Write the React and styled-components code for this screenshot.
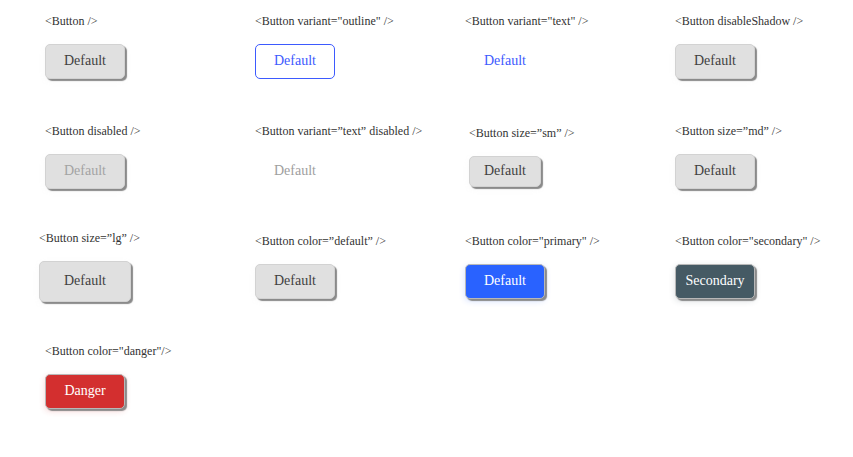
import styled, { createGlobalStyle, css } from 'styled-components';

const GlobalStyle = createGlobalStyle`
	body {
		margin: 0;
		background: #ffffff;
		font-family: serif;
	}
`

const Grid = styled.div`
	display: grid;
	grid-template-columns: repeat(4, 170px);
	grid-template-rows: repeat(4, 90px);
	column-gap: 40px;
	row-gap: 20px;
	padding-top: 1px;
	justify-items: center;
	align-items: center;
`

const Cell = styled.div`
	display: flex;
	flex-direction: column;
	align-items: flex-start;
	gap: 16px;
	width: ${({ $w }) => $w}px;
`

const Label = styled.span`
	font-size: 12px;
	line-height: 14px;
	color: #333333;
	white-space: nowrap;
`

const sizes = {
	sm: { w: 72, h: 31 },
	md: { w: 80, h: 35 },
	lg: { w: 92, h: 41 },
}

const colors = {
	default: { bg: '#e0e0e0', fg: '#3f3f3f', border: '#d2d2d2' },
	primary: { bg: '#2962ff', fg: '#ffffff', border: '#b8b8b8' },
	secondary: { bg: '#455a64', fg: '#ffffff', border: '#b8b8b8' },
	danger: { bg: '#d32f2f', fg: '#ffffff', border: '#b8b8b8' },
}

const StyledButton = styled.button`
	box-sizing: border-box;
	width: ${({ $size }) => sizes[$size].w}px;
	height: ${({ $size }) => sizes[$size].h}px;
	padding: 0;
	font-family: serif;
	font-size: 14px;
	border-radius: 5px;
	cursor: pointer;
	${({ $variant, $color, disabled }) => {
		const c = colors[$color];
		if ($variant === 'outline') return css`
			background: #ffffff;
			color: #3d5afe;
			border: 1px solid #3d5afe;
		`
		if ($variant === 'text') return css`
			background: transparent;
			border: none;
			color: ${disabled ? '#9e9e9e' : '#3d5afe'};
		`
		return css`
			background: ${c.bg};
			color: ${disabled ? '#a3a3a3' : c.fg};
			border: 1px solid ${c.border};
			box-shadow: 2px 2px 1px #8a8a8a, 0 2px 6px ${c.bg}33;
		`
	}}
`

function Button({ variant = 'contained', color = 'default', size = 'md', disabled, children = 'Default' }){
	return(
		<StyledButton $variant={variant} $color={color} $size={size} disabled={disabled}>
			{children}
		</StyledButton>
	)
}

const demos = [
	{ label: '<Button />', props: {} },
	{ label: '<Button variant="outline" />', props: { variant: 'outline' } },
	{ label: '<Button variant="text" />', props: { variant: 'text' } },
	{ label: '<Button disableShadow />', props: {} },
	{ label: '<Button disabled />', props: { disabled: true } },
	{ label: '<Button variant=”text” disabled />', props: { variant: 'text', disabled: true } },
	{ label: '<Button size=”sm” />', props: { size: 'sm' } },
	{ label: '<Button size=”md” />', props: { size: 'md' } },
	{ label: '<Button size=”lg” />', props: { size: 'lg' } },
	{ label: '<Button color=”default” />', props: { color: 'default' } },
	{ label: '<Button color="primary" />', props: { color: 'primary' } },
	{ label: '<Button color="secondary" />', props: { color: 'secondary' }, text: 'Secondary' },
	{ label: '<Button color="danger"/>', props: { color: 'danger' }, text: 'Danger' },
]

function App(){
	return(
		<>
			<GlobalStyle />
			<Grid>
				{demos.map((d, index) => (
					<Cell key={index} $w={sizes[d.props.size || 'md'].w}>
						<Label>{d.label}</Label>
						<Button {...d.props}>{d.text || 'Default'}</Button>
					</Cell>
				))}
			</Grid>
		</>
	)
}

export default App;
